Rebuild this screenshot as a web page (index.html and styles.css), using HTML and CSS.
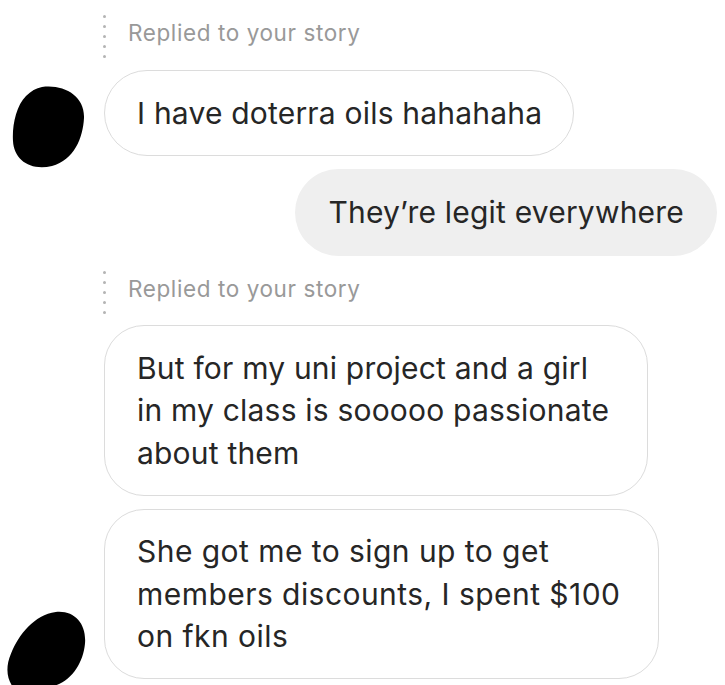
FILE: index.html
```html
<!DOCTYPE html>
<html>
<head>
<meta charset="utf-8">
<link rel="stylesheet" href="styles.css">
</head>
<body>
<div class="thread">
  <div class="reply-label label-1">
    <span class="dots"><i></i><i></i><i></i><i></i><i></i></span>
    <span class="reply-text">Replied to your story</span>
  </div>
  <div class="row incoming row-1">
    <div class="avatar-slot">
      <svg class="avatar avatar-1" width="74" height="82" viewBox="0 0 74 82"><path d="M30 1 C52 -2 73 10 72 32 C71 52 62 74 40 80 C18 85 2 74 1 55 C0 40 4 20 14 10 C19 5 24 2 30 1 Z" fill="#000"/></svg>
    </div>
    <div class="bubble outline">I have doterra oils hahahaha</div>
  </div>
  <div class="row outgoing">
    <div class="bubble filled">They’re legit everywhere</div>
  </div>
  <div class="reply-label label-2">
    <span class="dots"><i></i><i></i><i></i><i></i><i></i></span>
    <span class="reply-text">Replied to your story</span>
  </div>
  <div class="row incoming">
    <div class="avatar-slot"></div>
    <div class="bubble outline multi">But for my uni project and a girl<br>in my class is sooooo passionate<br>about them</div>
  </div>
  <div class="row incoming row-4">
    <div class="avatar-slot">
      <svg class="avatar avatar-2" width="84" height="74" viewBox="0 0 84 76"><path d="M52 1 C72 -1 84 14 82 34 C80 55 66 76 44 78 L8 78 C2 70 0 58 6 44 C14 24 30 4 52 1 Z" fill="#000"/></svg>
    </div>
    <div class="bubble outline multi wide">She got me to sign up to get<br>members discounts, I spent $100<br>on fkn oils</div>
  </div>
</div>
</body>
</html>
```
FILE: styles.css
```css
* { box-sizing: border-box; }
html, body {
  margin: 0;
  padding: 0;
  background: #fff;
  overflow: hidden;
}
body {
  width: 725px;
  height: 685px;
  font-family: Inter, "Liberation Sans", Arial, sans-serif;
  color: #262626;
}
.thread {
  display: flex;
  flex-direction: column;
  padding-top: 15px;
}
.reply-label {
  display: flex;
  align-items: center;
  gap: 22px;
  margin-left: 103px;
  height: 43px;
}
.dots {
  display: flex;
  flex-direction: column;
  gap: 7px;
}
.dots i {
  display: block;
  width: 3px;
  height: 3px;
  border-radius: 50%;
  background: #b4b4b4;
}
.reply-text {
  font-size: 22.5px;
  letter-spacing: 0.6px;
  color: #999;
  line-height: 1;
  margin-top: -7px;
}
.label-2 { margin-top: 15px; }
.row {
  display: flex;
  align-items: flex-end;
}
.row-1 { margin-top: 12px; }
.incoming + .outgoing { margin-top: 13px; }
.incoming + .incoming { margin-top: 13px; }
.label-2 + .incoming { margin-top: 11px; }
.outgoing { justify-content: flex-end; padding-right: 8px; }
.avatar-slot {
  width: 104px;
  flex: none;
  display: flex;
  align-self: flex-end;
}
.avatar-1 { margin: 0 0 -12px 12px; }
.avatar-2 { margin: 0 0 -6px 4px; }
.bubble {
  font-size: 30px;
  letter-spacing: 0.2px;
  line-height: 42.5px;
  padding: 20.5px 31px 20.5px 32px;
  border-radius: 44px;
  white-space: nowrap;
}
.outline {
  border: 1.5px solid #dcdcdc;
  background: #fff;
}
.filled {
  background: #efefef;
  padding: 22.5px 33px;
}
.multi {
  padding-right: 38px;
  border-radius: 40px;
}
.wide { letter-spacing: 0.45px; }
```
